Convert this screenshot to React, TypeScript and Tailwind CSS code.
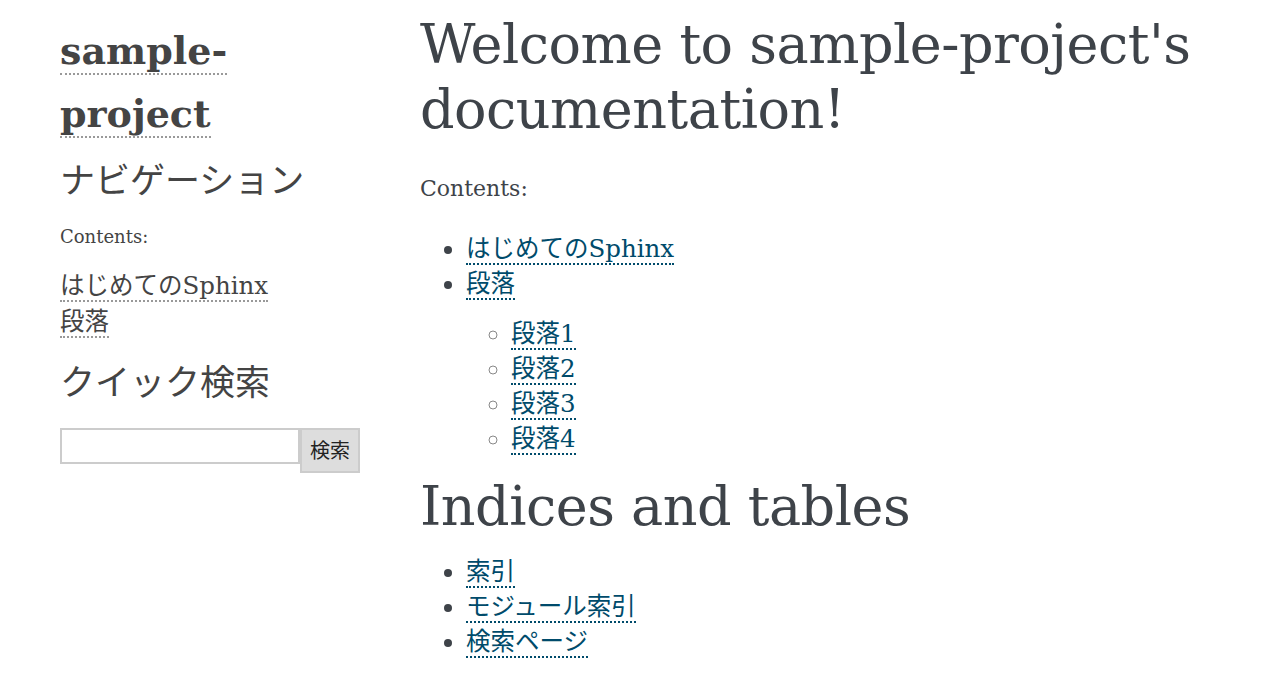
const serif = "font-['DejaVu_Serif','Noto_Sans_CJK_JP',serif]";

function SideLink({ children }: { children: React.ReactNode }) {
  return (
    <a href="#" className="border-b-2 border-dotted border-[#999] text-[#444]">
      {children}
    </a>
  );
}

function DocLink({ children }: { children: React.ReactNode }) {
  return (
    <a href="#" className="border-b-2 border-dotted border-[#004b6b] text-[#004b6b]">
      {children}
    </a>
  );
}

export default function App() {
  return (
    <div className={`${serif} flex min-h-screen bg-white pl-[60px] text-[#3e4349]`}>
      <aside className="w-[300px] shrink-0 pt-[19px]">
        <h1 className="text-[38px] font-bold leading-[63px] text-[#444]">
          <SideLink>sample-project</SideLink>
        </h1>
        <h3 className="mt-[13px] text-[35px] font-normal leading-[46px] text-[#444]">ナビゲーション</h3>
        <p className="mt-[19px] text-[18px] leading-[28px] text-[#444]">Contents:</p>
        <ul className="mt-[17px] text-[24.5px] leading-[36px]">
          <li>
            <SideLink>はじめてのSphinx</SideLink>
          </li>
          <li>
            <SideLink>段落</SideLink>
          </li>
        </ul>
        <h3 className="mt-[20px] text-[35px] font-normal leading-[46px] text-[#444]">クイック検索</h3>
        <form className="mt-[22px] flex items-start">
          <input
            type="text"
            className="h-[36px] w-[240px] border-2 border-[#ccc] bg-white px-1 outline-none"
          />
          <button
            type="button"
            className="h-[45px] w-[60px] border-2 border-[#ccc] bg-[#ddd] text-[20px] text-[#222]"
          >
            検索
          </button>
        </form>
      </aside>

      <main className="ml-[60px] min-w-0 flex-1 pr-[60px] pt-[12px]">
        <h1 className="text-[54px] font-normal leading-[65px] tracking-[-0.5px]">
          Welcome to sample-project's documentation!
        </h1>
        <p className="mt-[30px] text-[22px] leading-[34px]">Contents:</p>
        <ul className="mt-[25px] list-disc pl-[46px] text-[24.5px] leading-[35px] marker:text-[#3e4349]">
          <li>
            <DocLink>はじめてのSphinx</DocLink>
          </li>
          <li>
            <DocLink>段落</DocLink>
            <ul className="mt-[15px] list-[circle] pl-[45px] marker:text-[#888]">
              <li>
                <DocLink>段落1</DocLink>
              </li>
              <li>
                <DocLink>段落2</DocLink>
              </li>
              <li>
                <DocLink>段落3</DocLink>
              </li>
              <li>
                <DocLink>段落4</DocLink>
              </li>
            </ul>
          </li>
        </ul>
        <h1 className="mt-[18px] text-[54px] font-normal leading-[65px] tracking-[-0.5px]">Indices and tables</h1>
        <ul className="mt-[15px] list-disc pl-[46px] text-[24.5px] leading-[35px]">
          <li>
            <DocLink>索引</DocLink>
          </li>
          <li>
            <DocLink>モジュール索引</DocLink>
          </li>
          <li>
            <DocLink>検索ページ</DocLink>
          </li>
        </ul>
      </main>
    </div>
  );
}
